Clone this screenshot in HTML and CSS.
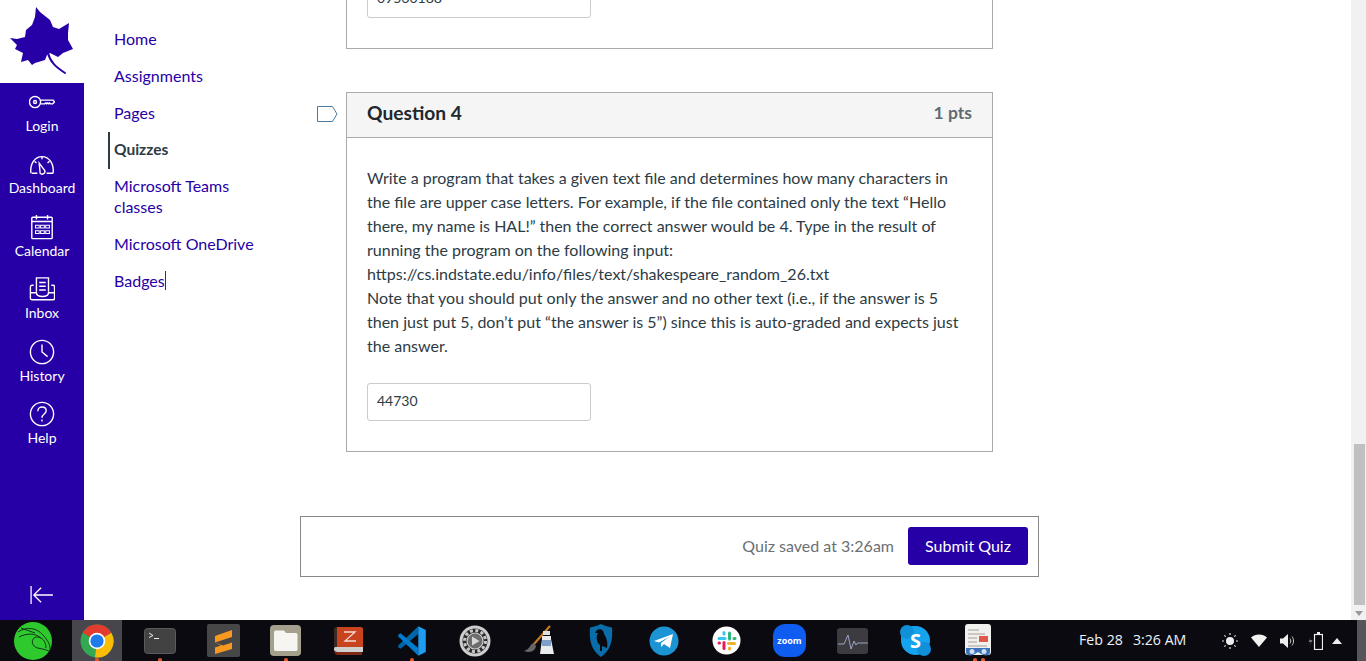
FILE: index.html
```html
<!DOCTYPE html>
<html lang="en">
<head>
<meta charset="utf-8">
<title>Quiz</title>
<link rel="stylesheet" href="styles.css">
</head>
<body>
<div class="app">
  <div class="window">
    <aside class="global-nav">
      <div class="logo">
        <svg width="84" height="83" viewBox="0 0 84 83"><path class="leaf" d="M36 7 40 12 45 16 50 20 53 27 59 29 69 23 68 33 68 40 73 49 63 53 58 57 50 53 47 55 45 60 35 63 32 65 28 60 21 62 23 53 15 49 17 45 10 38 17 39 25 37 26 30 32 25 35 17Z"/><path class="leaf-stem" d="M48 53C50 62 56 67 65 73"/></svg>
      </div>
      <nav class="global-links">
        <a class="gl"><svg class="gi" viewBox="0 0 28 28"><circle cx="6.500" cy="14" r="6"/><circle cx="6.500" cy="14" r="1.600"/><path d="M12.500 12H26L27.500 14 25.500 16H23L22 15 21 16 20 15 19 16 18 15 17 16H12.500"/></svg><span>Login</span></a>
        <a class="gl"><svg class="gi" viewBox="0 0 28 28"><path d="M3 24H9M19 24H26M2 24C1 14 6 6 14 6S27 14 26 24"/><path d="M14 6V9M6 11 8 13M22 11 20 13"/><path d="M11 13 17 21A3 3 0 0 1 12 24Z"/></svg><span>Dashboard</span></a>
        <a class="gl"><svg class="gi" viewBox="0 0 28 28"><rect x="3" y="3.500" width="22" height="23" rx="1"/><path d="M3 8H25M8 1V6M20 1V6"/><path class="gi-thin" d="M7 12H11V15H7ZM12.500 12H16.500V15H12.500ZM18 12H22V15H18ZM7 18H11V21H7ZM12.500 18H16.500V21H12.500ZM18 18H22V21H18Z"/></svg><span>Calendar</span></a>
        <a class="gl"><svg class="gi" viewBox="0 0 28 28"><path d="M8 17V2H21V17M5 10H3C2 10 1.500 11 1.500 12V24C1.500 25 2 25.500 3 25.500H26C27 25.500 27.500 25 27.500 24V12C27.500 11 27 10 26 10H24"/><path d="M1.500 18H8C8 21 10 22 14.500 22S21 21 21 18H27.500M11 7H18M11 11H18M11 15H18"/></svg><span>Inbox</span></a>
        <a class="gl"><svg class="gi" viewBox="0 0 28 28"><circle cx="14" cy="14" r="12.500"/><path d="M14 6V14L20 19"/></svg><span>History</span></a>
        <a class="gl"><svg class="gi" viewBox="0 0 28 28"><circle cx="14" cy="14" r="12.500"/><path d="M9.500 11C9.500 8 12 6.500 14 6.500 17 6.500 18.500 8.500 18.500 10.500 18.500 14 14 14 14 18"/><path d="M14 20V22"/></svg><span>Help</span></a>
        <a class="gl gl-collapse"><svg class="gi gi-wide" viewBox="0 0 28 22"><path d="M2 1V21M26 11H6M13 3 5 11 13 19"/></svg></a>
      </nav>
    </aside>

    <nav class="course-nav">
      <a class="cn">Home</a>
      <a class="cn">Assignments</a>
      <a class="cn">Pages</a>
      <a class="cn cn-active">Quizzes</a>
      <a class="cn">Microsoft Teams classes</a>
      <a class="cn">Microsoft OneDrive</a>
      <a class="cn"><span class="cn-caret">Badges</span></a>
    </nav>

    <main class="quiz">
      <section class="card card-prev">
        <div class="answer answer-prev">09560188</div>
      </section>

      <section class="card card-q">
        <svg class="flag" width="21" height="16" viewBox="0 0 21 16"><path d="M.5.500H15.500L20 8 15.500 15.500H.5Z"/></svg>
        <header class="card-head">
          <h2 class="card-title">Question 4</h2>
          <span class="card-pts">1 pts</span>
        </header>
        <div class="card-body">
          <p class="q-text">Write a program that takes a given text file and determines how many characters in the file are upper case letters. For example, if the file contained only the text “Hello there, my name is HAL!” then the correct answer would be 4. Type in the result of running the program on the following input:<br>https://cs.indstate.edu/info/files/text/shakespeare_random_26.txt<br>Note that you should put only the answer and no other text (i.e., if the answer is 5 then just put 5, don’t put “the answer is 5”) since this is auto-graded and expects just the answer.</p>
          <div class="answer">44730</div>
        </div>
      </section>

      <footer class="submit-bar">
        <span class="saved">Quiz saved at 3:26am</span>
        <button class="submit" type="button">Submit Quiz</button>
      </footer>
    </main>

    <div class="scrollbar">
      <div class="thumb"></div>
      <div class="arrow"></div>
    </div>
  </div>

  <div class="taskbar">
    <div class="dock">
      <div class="app-i"><svg width="40" height="40" viewBox="0 0 40 40"><circle cx="20" cy="20" r="19" fill="#2dc92d"/><path d="M5 11C14 5 24 7 30 14 34 19 37 22 37 28M6 16C14 12 22 12 28 17M33 27C33 20 29 16 24 16 19 16 18 22 21 25 24 28 29 27 36 30M8 7 22 12" fill="none" stroke="#12361a" stroke-width="1"/></svg></div>
      <div class="app-i app-on"><svg width="34" height="34" viewBox="0 0 34 34"><circle cx="17" cy="17" r="16.500" fill="#34a853"/><path d="M17 17 31.300 8.750A16.500 16.500 0 0 1 15 33.400Z" fill="#fbbc04"/><path d="M17 17 2.700 8.750A16.500 16.500 0 0 1 31.300 8.750Z" fill="#e33b2e"/><circle cx="17" cy="17" r="8.300" fill="#fff"/><circle cx="17" cy="17" r="6.600" fill="#1f7bea"/></svg><i class="dot"></i></div>
      <div class="app-i"><svg width="32" height="26" viewBox="0 0 32 26"><rect x=".5" y=".5" width="31" height="25" rx="3" fill="#424242" stroke="#5a5a5a"/><path d="M5 5 9 7.500 5 9.500" fill="none" stroke="#eee"/><path d="M10 10.500H15" stroke="#eee"/></svg><i class="dot"></i></div>
      <div class="app-i app-sub"><svg width="33" height="33" viewBox="0 0 33 33"><rect width="33" height="33" rx="2" fill="#474747"/><path d="M25 6V13L8 18.500 16 21.500 25 18.500V25L8 30V23.500L14 21.500 8 18.500V12Z" fill="#f89820"/></svg></div>
      <div class="app-i"><svg width="31" height="31" viewBox="0 0 31 31"><rect width="31" height="31" rx="4" fill="#a5a08c"/><path d="M4 8C4 6 5 5.500 6 5.500H14L16 8H26C27 8 27.500 9 27.500 10V24C27.500 25.500 27 26 25.500 26H6C5 26 4 25.500 4 24Z" fill="#f6f5f1"/></svg><i class="dot"></i></div>
      <div class="app-i"><svg width="29" height="29" viewBox="0 0 29 29"><path d="M3 1H27C28 1 29 2 29 3V23H3Z" fill="#c8431e"/><path d="M0 3C0 2 1 1 3 1V23H0Z" fill="#3a2a22"/><path d="M0 23C0 21 1 21 3 21H29V26H3C1 26 0 25 0 23Z" fill="#cfcfcf"/><path d="M0 25C1 28 2 29 4 29H28V26H3Z" fill="#7d2714"/><path d="M10 6H21L11 15H22" fill="none" stroke="#f3ddd3" stroke-width="1.300"/></svg></div>
      <div class="app-i"><svg width="30" height="30" viewBox="0 0 100 100"><path d="M71 1 71 27 12 76 4 71 4 65Z" fill="#0065a9"/><path d="M71 99 71 73 12 24 4 29 4 35Z" fill="#007acc"/><path d="M71 1 96 13V87L71 99Z" fill="#1f9cf0"/></svg><i class="dot"></i></div>
      <div class="app-i"><svg width="32" height="32" viewBox="0 0 32 32"><circle cx="16" cy="16" r="15.500" fill="#cdcdcd"/><circle cx="16" cy="16" r="12.500" fill="#2a2a2c"/><circle cx="16" cy="16" r="10.500" fill="none" stroke="#c9c9c9" stroke-width="3" stroke-dasharray="3 2.500"/><circle cx="16" cy="16" r="8" fill="#6d6d6d" stroke="#d0d0d0" stroke-width="1.200"/><path d="M13 11.500 20.500 16 13 20.500Z" fill="#d6d6d6"/></svg></div>
      <div class="app-i"><svg width="32" height="32" viewBox="0 0 32 32"><path d="M28 1 12 19" stroke="#c77a20" stroke-width="2.200" fill="none"/><path d="M12 18C7 19 9 24 2 26 7 28 13 27 14 21Z" fill="#666"/><path d="M20 11H29V14L32 29H18L20 14Z" fill="#e8ecee"/><rect x="21" y="6" width="7" height="4" fill="#e0e0e0"/><rect x="20" y="15" width="9" height="6" fill="#7f9fc9"/></svg></div>
      <div class="app-i"><svg width="24" height="33" viewBox="0 0 24 33"><path d="M12 0C16 2 20 3 23 3.500 24 16 22 26 12 33 2 26 0 16 1 3.500 4 3 8 2 12 0Z" fill="#0a6ca8"/><path d="M8 6C11 4 15 6 15 10 18 14 19 20 18 24L13 22 13 27H11L11 21C7 18 7 12 9 9L6 9Z" fill="#0a0a0e"/></svg></div>
      <div class="app-i"><svg width="30" height="30" viewBox="0 0 30 30"><circle cx="15" cy="15" r="14.500" fill="#1c93d2"/><path d="M5 15 24 8 21 22 15 18 12 21 12 17 20 11 10 16.500Z" fill="#fff"/></svg></div>
      <div class="app-i"><svg width="29" height="29" viewBox="0 0 29 29"><circle cx="14.500" cy="14.500" r="14" fill="#fff"/><path d="M7 12.500H13" stroke="#36c5f0" stroke-width="3" stroke-linecap="round"/><path d="M12 6.500V8" stroke="#36c5f0" stroke-width="3" stroke-linecap="round"/><path d="M17.500 7V13" stroke="#2eb67d" stroke-width="3" stroke-linecap="round"/><path d="M22 12.500H23" stroke="#2eb67d" stroke-width="3" stroke-linecap="round"/><path d="M16.500 17.500H22.500" stroke="#ecb22e" stroke-width="3" stroke-linecap="round"/><path d="M17.500 22V23" stroke="#ecb22e" stroke-width="3" stroke-linecap="round"/><path d="M12 16.500V22.500" stroke="#e01e5a" stroke-width="3" stroke-linecap="round"/><path d="M7 17H7.500" stroke="#e01e5a" stroke-width="3" stroke-linecap="round"/></svg></div>
      <div class="app-i"><div class="zoom-i">zoom</div></div>
      <div class="app-i"><svg width="32" height="26" viewBox="0 0 32 26"><rect width="31" height="26" rx="3" fill="#3c3c40"/><path d="M1 16H7L11 7 14 21 17 13 19 17 20.500 15H31" fill="none" stroke="#9aa4c8"/></svg></div>
      <div class="app-i"><div class="skype-i"><span>S</span></div></div>
      <div class="app-i"><svg width="27" height="33" viewBox="0 0 27 33"><rect width="26" height="31" rx="3" fill="#f0f0ee"/><path d="M3 6H14M3 10H20M3 14H12M3 18H12M3 22H22" stroke="#a89c90" stroke-width="1.200"/><rect x="14" y="12" width="9" height="6" fill="#e0584a"/><path d="M1 24H25V28C25 31 22 32 18 31L13 28 8 31C4 32 1 31 1 28Z" fill="#3a73b8"/><circle cx="7" cy="27.500" r="2.500" fill="#cfe0f2"/><circle cx="19" cy="27.500" r="2.500" fill="#cfe0f2"/></svg><i class="dot dot-a"></i><i class="dot dot-b"></i></div>
    </div>
    <div class="clock"><span>Feb 28</span><span>3:26 AM</span></div>
    <div class="tray">
      <svg width="16" height="16" viewBox="0 0 16 16"><circle cx="8" cy="8" r="4" fill="#eee"/><path d="M8 0V2M8 14V16M0 8H2M14 8H16M2.300 2.300 3.700 3.700M12.300 12.300 13.700 13.700M2.300 13.700 3.700 12.300M12.300 3.700 13.700 2.300" stroke="#ddd" stroke-width="1.200"/></svg>
      <svg width="16" height="13" viewBox="0 0 16 13"><path d="M0 3.500C4 -.5 12 -.5 16 3.500L8 13Z" fill="#f2f2f2"/></svg>
      <svg width="15" height="14" viewBox="0 0 15 14"><path d="M0 4.500H3L8 0V14L3 9.500H0Z" fill="#eee"/><path d="M10 4.500C11 6 11 8 10 9.500M12 2.500C14 5 14 9 12 11.500" fill="none" stroke="#ccc"/></svg>
      <svg class="tray-bat" width="15" height="18" viewBox="0 0 15 18"><path d="M3 5 .5 10H3L1.500 14 4.500 8H2Z" fill="#777"/><rect x="6.500" y="2.500" width="8" height="15" fill="none" stroke="#eee" stroke-width="1.200"/><rect x="9" y="0" width="3" height="2" fill="#eee"/></svg>
      <svg width="10" height="6" viewBox="0 0 10 6"><path d="M0 6 5 0 10 6Z" fill="#eee"/></svg>
    </div>
    <div class="corner"></div>
  </div>
</div>
</body>
</html>
```
FILE: styles.css
```css
* { box-sizing: border-box; }
html, body { margin: 0; height: 100%; overflow: hidden; }
body { font-family: Lato, "Liberation Sans", sans-serif; color: #2d3b45; background: #fff; }
.app { height: 661px; display: flex; flex-direction: column; }
.window { flex: 1; min-height: 0; display: flex; overflow: hidden; background: #fff; }

/* global nav */
.global-nav { width: 84px; flex: none; display: flex; flex-direction: column; }
.logo { height: 83px; flex: none; }
.logo svg { display: block; }
.leaf { fill: #2600a6; }
.leaf-stem { fill: none; stroke: #2600a6; stroke-width: 2; stroke-linecap: round; }
.global-links { flex: 1; background: #2600a6; display: flex; flex-direction: column; align-items: center; padding-top: 6px; }
.gl { display: flex; flex-direction: column; align-items: center; height: 62.4px; color: #fff; font-size: 14px; line-height: 20px; white-space: nowrap; }
.gi { width: 26px; height: 26px; fill: none; stroke: #fff; stroke-width: 1.5; margin-bottom: 1px; flex: none; }
.gi-thin { stroke-width: 1.1; }
.gi-wide { width: 26px; height: 20px; stroke-width: 1.4; }
.gl-collapse { margin-top: auto; height: 35px; }

/* course nav */
.course-nav { width: 192px; flex: none; margin-left: 24px; padding-top: 21px; display: flex; flex-direction: column; align-items: flex-start; }
.cn { display: block; width: 148px; padding: 7px 0 9px 4px; border-left: 2px solid transparent; color: #2600a6; font-size: 16px; line-height: 21px; }
.cn-active { color: #2d3b45; font-weight: 700; border-left-color: #2d3b45; font-size: 15.5px; margin-bottom: -1px; }
.cn-caret { border-right: 1px solid #2d3b45; }

/* quiz */
.quiz { width: 739px; flex: none; display: flex; flex-direction: column; align-items: flex-start; }
.card { width: 647px; margin-left: 46px; border: 1px solid #aaa; background: #fff; position: relative; }
.card-prev { margin-top: -32px; height: 81px; padding-left: 20px; padding-top: 12px; }
.card-q { margin-top: 43px; }
.flag { position: absolute; left: -30px; top: 13px; fill: #fff; stroke: #4a7ba0; stroke-width: 1; }
.card-head { display: flex; justify-content: space-between; align-items: center; height: 45px; padding: 0 20px 5px; background: #f5f5f5; border-bottom: 1px solid #aaa; }
.card-title { margin: 0; font-size: 19.2px; font-weight: 700; color: #20272d; }
.card-pts { font-size: 17.5px; font-weight: 700; color: #5f6a72; }
.card-body { padding: 28px 20px 30px; }
.q-text { margin: 0 0 25px; font-size: 16px; line-height: 24px; color: #2d3b45; }
.answer { width: 224px; height: 38px; border: 1px solid #c7cdd1; border-radius: 3px; padding: 0 9px; font-size: 14px; line-height: 34px; color: #2d3b45; background: #fff; }
.answer-prev { line-height: 32px; height: 37px; }
.submit-bar { margin-top: 64px; width: 739px; height: 61px; border: 1px solid #888; display: flex; justify-content: flex-end; align-items: center; gap: 14px; padding: 0 10px 2px 0; }
.saved { font-size: 16px; color: #6b7075; }
.submit { width: 120px; height: 38px; background: #2600a6; color: #fff; border: 0; border-radius: 3px; font: 16px Lato, "Liberation Sans", sans-serif; padding: 0; }

/* scrollbar */
.scrollbar { margin-left: auto; width: 15px; flex: none; background: #f1f1f1; display: flex; flex-direction: column; align-items: center; justify-content: flex-end; padding-bottom: 4px; }
.thumb { width: 11px; height: 161px; background: #c0c0c0; margin-bottom: 6px; margin-left: 1px; }
.arrow { width: 0; height: 0; border-left: 4px solid transparent; border-right: 4px solid transparent; border-top: 5px solid #9a9a9a; }

/* taskbar */
.taskbar { height: 41px; flex: none; background: #0b0a10; display: flex; align-items: center; color: #eaf2fa; }
.dock { display: flex; align-items: center; height: 100%; width: 1010px; flex: none; }
.app-i { width: 63px; height: 41px; flex: none; display: flex; align-items: center; justify-content: center; position: relative; }
.app-i:first-child { width: 65px; }
.app-sub svg { margin-left: 1px; }
.app-on::before { content: ""; position: absolute; left: 7px; right: 6px; top: 0; bottom: 0; background: #46464c; }
.app-on svg { position: relative; }
.dot { position: absolute; left: 50%; bottom: 0; width: 4px; height: 3px; margin-left: -2px; background: #e8562a; border-radius: 2px 2px 0 0; }
.dot-a { margin-left: -6px; }
.dot-b { margin-left: 2px; }
.zoom-i { width: 33px; height: 33px; border-radius: 12px; background: #0f5cf0; color: #fff; font: 700 9px/33px "Open Sans", sans-serif; text-align: center; }
.skype-i { width: 29px; height: 29px; border-radius: 50%; background: #16a3ee; color: #fff; font: 700 20px/29px "Open Sans", sans-serif; text-align: center; box-shadow: -3px -3px 0 -3px #0f90d8; position: relative; }
.skype-i::before, .skype-i::after { content: ""; position: absolute; width: 14px; height: 14px; border-radius: 50%; background: #0f90d8; z-index: 0; }
.skype-i::before { left: -1px; top: -1px; }
.skype-i::after { right: -1px; bottom: -1px; }
.skype-i span { position: relative; z-index: 1; }
.clock { margin-left: 69px; margin-bottom: 2px; display: flex; gap: 10px; font: 14.2px "Open Sans", "Noto Sans", sans-serif; width: 108px; white-space: nowrap; }
.tray { margin-left: 35px; display: flex; align-items: center; gap: 13px; }
.tray-bat { margin-right: -4px; }
.corner { margin-left: auto; width: 9px; height: 100%; background: #55555a; }
```
